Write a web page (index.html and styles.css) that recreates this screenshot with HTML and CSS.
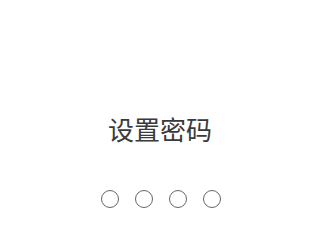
FILE: index.html
```html
<!DOCTYPE html>
<html lang="zh-CN">
<head>
  <meta charset="UTF-8">
  <title>设置密码</title>
  <link rel="stylesheet" href="styles.css">
</head>
<body>
  <div class="container">
    <h1 class="title">设置密码</h1>
    <div class="dots">
      <span class="dot"></span>
      <span class="dot"></span>
      <span class="dot"></span>
      <span class="dot"></span>
    </div>
  </div>
</body>
</html>
```

FILE: styles.css
```css
body {
  margin: 0;
  background-color: #ffffff;
  font-family: "Noto Sans CJK SC", "Noto Sans", sans-serif;
}
.container {
  display: flex;
  flex-direction: column;
  align-items: center;
  padding-top: 113px;
  width: 320px;
}
.title {
  margin: 0;
  font-size: 26px;
  font-weight: normal;
  line-height: 32px;
  color: #3a3a3a;
}
.dots {
  display: flex;
  gap: 16px;
  margin-top: 45px;
  padding-left: 2px;
}
.dot {
  width: 16px;
  height: 16px;
  border: 1.5px solid #666666;
  border-radius: 50%;
}
```
